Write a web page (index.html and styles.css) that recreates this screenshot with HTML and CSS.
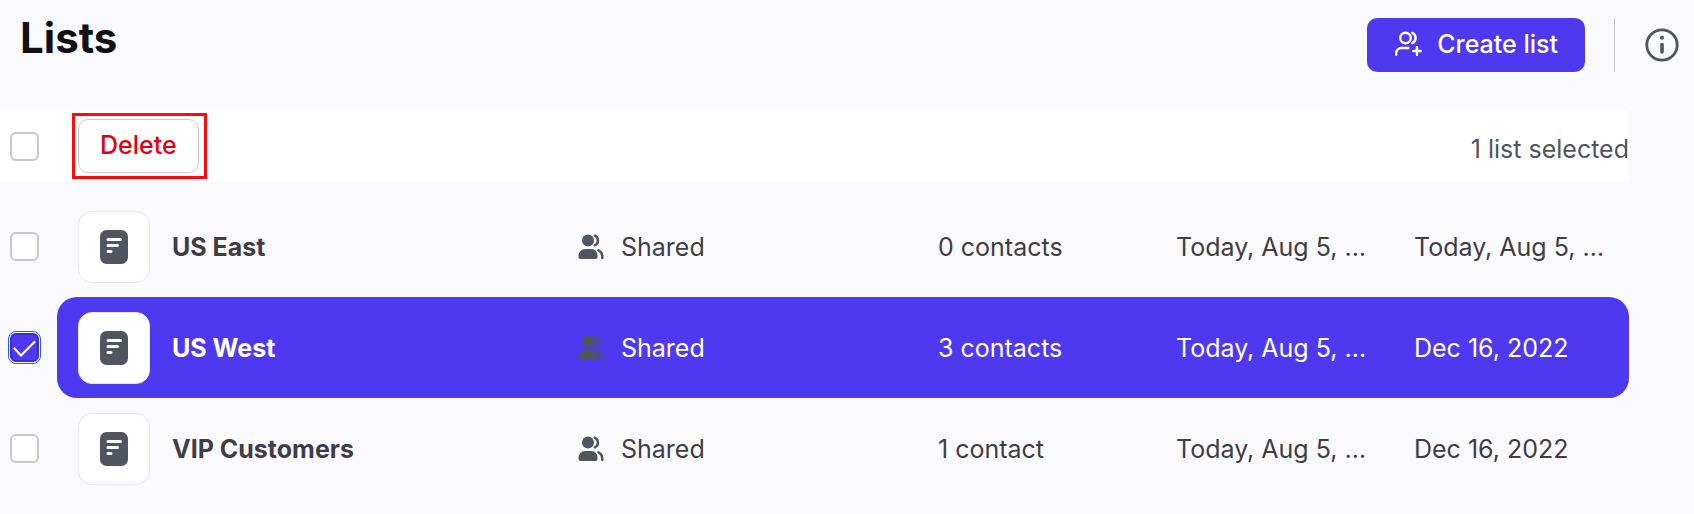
FILE: index.html
```html
<!DOCTYPE html>
<html lang="en">
<head>
<meta charset="utf-8">
<title>Lists</title>
<link rel="stylesheet" href="styles.css">
</head>
<body>
<svg class="sprite" aria-hidden="true">
  <symbol id="icon-list" viewBox="0 0 28 34">
    <rect width="28" height="34" rx="6.500" fill="#50555f"/>
    <path d="M8 9.500h12.500M8 15.500h9.500M8 21.500h3" fill="none" stroke="#fff" stroke-width="3" stroke-linecap="round"/>
  </symbol>
  <symbol id="icon-people" viewBox="0 0 26 26">
    <g fill="#50555f">
      <circle cx="10" cy="6.500" r="6"/>
      <path d="M7 15h6.500a6 6 0 0 1 6 6v2a2 2 0 0 1-2 2H2.500a2 2 0 0 1-2-2v-1.500A6.500 6.500 0 0 1 7 15z"/>
    </g>
    <path d="M16.800 1.700c4.200 1.500 4.200 8 0 9.600M20.500 16.300c2.600 1.200 4 4 3.800 7.700" fill="none" stroke="#50555f" stroke-width="2.500" stroke-linecap="round"/>
  </symbol>
</svg>
<header class="header">
  <h1 class="title">Lists</h1>
  <div class="actions">
    <button class="create" type="button">
      <svg class="create-icon" viewBox="0 0 28 26" aria-hidden="true">
        <g fill="none" stroke="#fff" stroke-width="2.400" stroke-linecap="round">
          <circle cx="11.500" cy="7" r="5.300"/>
          <path d="M18.300 1.900c4.400 1.900 4.400 8.300 0 10.200M2.200 23.800v-1.600a5.200 5.200 0 0 1 5.200-5.200h7M23 16.300v7.400M19.300 20h7.400"/>
        </g>
      </svg>
      Create list
    </button>
    <span class="divider"></span>
    <button class="info" type="button" aria-label="Information">
      <svg class="info-icon" viewBox="0 0 34 34" aria-hidden="true">
        <circle cx="17" cy="17" r="15.200" fill="none" stroke="#50555f" stroke-width="2.800"/>
        <circle cx="17" cy="9.700" r="2" fill="#50555f"/>
        <path d="M17 16.500v7.500" fill="none" stroke="#50555f" stroke-width="3.600" stroke-linecap="round"/>
      </svg>
    </button>
  </div>
</header>
<main class="content">
  <div class="toolbar">
    <input class="check" type="checkbox" aria-label="Select all lists">
    <div class="highlight"><button class="delete" type="button">Delete</button></div>
    <span class="count">1 list selected</span>
  </div>
  <table class="lists">
    <colgroup><col class="col-check"><col><col class="col-access"><col class="col-date"><col class="col-date"><col class="col-last"></colgroup>
    <tbody>
      <tr>
        <td class="select"><input class="check" type="checkbox" aria-label="Select US East"></td>
        <td class="first"><div class="name"><span class="tile"><svg class="list-icon" aria-hidden="true"><use href="#icon-list"/></svg></span>US East</div></td>
        <td><div class="access"><svg class="people-icon" aria-hidden="true"><use href="#icon-people"/></svg>Shared</div></td>
        <td>0 contacts</td>
        <td>Today, Aug 5, …</td>
        <td>Today, Aug 5, …</td>
      </tr>
      <tr class="selected">
        <td class="select"><input class="check" type="checkbox" aria-label="Select US West" checked></td>
        <td class="first"><div class="name"><span class="tile"><svg class="list-icon" aria-hidden="true"><use href="#icon-list"/></svg></span>US West</div></td>
        <td><div class="access"><svg class="people-icon" aria-hidden="true"><use href="#icon-people"/></svg>Shared</div></td>
        <td>3 contacts</td>
        <td>Today, Aug 5, …</td>
        <td>Dec 16, 2022</td>
      </tr>
      <tr>
        <td class="select"><input class="check" type="checkbox" aria-label="Select VIP Customers"></td>
        <td class="first"><div class="name"><span class="tile"><svg class="list-icon" aria-hidden="true"><use href="#icon-list"/></svg></span>VIP Customers</div></td>
        <td><div class="access"><svg class="people-icon" aria-hidden="true"><use href="#icon-people"/></svg>Shared</div></td>
        <td>1 contact</td>
        <td>Today, Aug 5, …</td>
        <td>Dec 16, 2022</td>
      </tr>
    </tbody>
  </table>
</main>
</body>
</html>
```
FILE: styles.css
```css
* {
  box-sizing: border-box;
}

body {
  margin: 0;
  background: #fbfaff;
  color: #3f3d45;
  font: 25px/32px Inter, sans-serif;
}

button {
  font: inherit;
}

.sprite {
  display: none;
}

.header {
  display: flex;
  justify-content: space-between;
  align-items: flex-start;
  padding: 12px 15px 38px 20px;
}

.title {
  margin: 0;
  color: #101014;
  font-size: 42px;
  line-height: 52px;
  font-weight: 700;
}

.actions {
  display: flex;
  align-items: center;
  padding-top: 6px;
}

.create {
  display: flex;
  align-items: center;
  gap: 15px;
  height: 54px;
  padding: 0 27px 2px;
  border: 0;
  border-radius: 10px;
  background: #4f39f0;
  color: #fff;
  font-weight: 500;
}

.create-icon {
  width: 28px;
  height: 26px;
}

.divider {
  width: 1px;
  height: 54px;
  margin: 0 30px 0 29px;
  background: #c9c8ce;
}

.info {
  display: flex;
  padding: 0;
  border: 0;
  background: none;
}

.info-icon {
  width: 34px;
  height: 34px;
}

.content {
  margin-right: 65px;
}

.toolbar {
  display: flex;
  align-items: center;
  height: 72px;
  margin-bottom: 14px;
  padding-left: 10px;
  background: #fff;
}

.check {
  appearance: none;
  display: block;
  flex: none;
  width: 29px;
  height: 29px;
  margin: 0;
  border: 2px solid #c8c8ca;
  border-radius: 6px;
  background: #fff;
}

.check:checked {
  border-color: #3d2fc4;
  background: #4f39f0 url("data:image/svg+xml,%3Csvg xmlns='http://www.w3.org/2000/svg' viewBox='0 0 25 25'%3E%3Cpath d='M2.500 13.500l6.500 7L22.500 7' fill='none' stroke='white' stroke-width='2.200' stroke-linecap='round' stroke-linejoin='round'/%3E%3C/svg%3E") center / 25px 25px no-repeat;
  outline: 1px solid #2458e0;
  outline-offset: 1px;
}

.highlight {
  position: relative;
  margin-left: 39px;
}

.highlight::after {
  content: "";
  position: absolute;
  inset: -6px -8px -6px -6px;
  border: 3px solid #ff0a0a;
  pointer-events: none;
}

.delete {
  display: block;
  height: 54px;
  padding: 0 21px 2px;
  border: 1px solid #cac8d0;
  border-radius: 10px;
  background: #fff;
  color: #e00014;
  font-weight: 500;
}

.count {
  margin-left: auto;
  padding-top: 6px;
  color: #50555f;
}

.lists {
  width: 100%;
  table-layout: fixed;
  border-collapse: collapse;
}

.col-check {
  width: 57px;
}

.col-access {
  width: 360px;
}

.col-date {
  width: 238px;
}

.col-last {
  width: 215px;
}

.lists td {
  height: 101px;
  padding: 0;
  vertical-align: middle;
  white-space: nowrap;
}

.lists .select {
  padding-left: 10px;
}

.lists .first {
  padding-left: 21px;
}

.name {
  display: flex;
  align-items: center;
  gap: 22px;
  font-weight: 700;
}

.tile {
  display: grid;
  place-items: center;
  width: 72px;
  height: 72px;
  border: 1px solid #e9e7ef;
  border-radius: 14px;
  background: #fff;
}

.list-icon {
  width: 28px;
  height: 34px;
}

.access {
  display: flex;
  align-items: center;
  gap: 17px;
}

.people-icon {
  width: 26px;
  height: 26px;
}

.selected td:not(.select) {
  background: #4f39f0;
  color: #fff;
}

.selected .first {
  border-radius: 20px 0 0 20px;
}

.selected td:last-child {
  border-radius: 0 20px 20px 0;
}
```
